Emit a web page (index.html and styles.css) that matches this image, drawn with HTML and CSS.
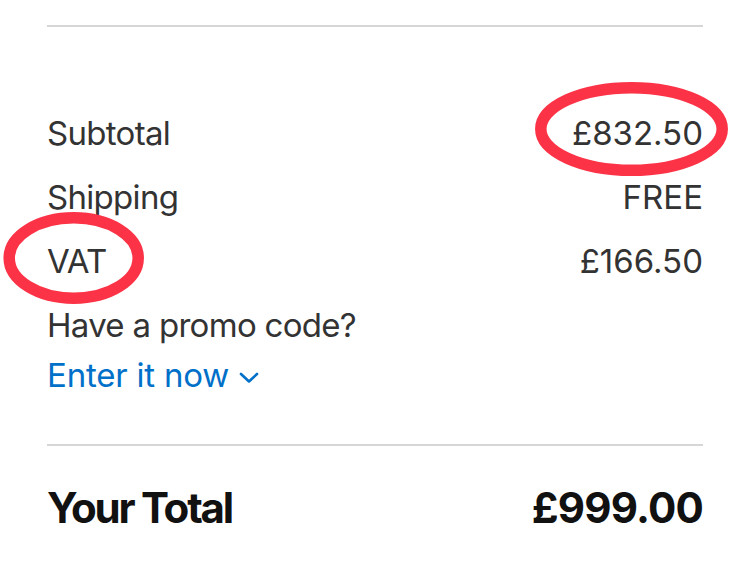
FILE: index.html
```html
<!DOCTYPE html>
<html lang="en">
<head>
<meta charset="utf-8">
<title>Order summary</title>
<link rel="stylesheet" href="styles.css">
</head>
<body>
<main class="summary">
  <hr class="divider divider-top">
  <div class="lines">
    <div class="row"><span>Subtotal</span><span class="value">£832.50</span></div>
    <div class="row"><span>Shipping</span><span class="value">FREE</span></div>
    <div class="row"><span>VAT</span><span class="value">£166.50</span></div>
    <div class="promo">
      <div class="promo-q">Have a promo code?</div>
      <a class="promo-link" href="#">Enter it now<svg class="chev" width="20" height="12" viewBox="0 0 20 12"><path d="M2 2 L10 9.5 L18 2" fill="none" stroke="currentColor" stroke-width="2.6" stroke-linecap="round" stroke-linejoin="round"/></svg></a>
    </div>
  </div>
  <hr class="divider divider-bottom">
  <div class="row total"><span class="total-label">Your Total</span><span class="total-value">£999.00</span></div>
</main>
<svg class="marks" width="750" height="576" viewBox="0 0 750 576" aria-hidden="true">
  <ellipse cx="631.5" cy="129" rx="90.7" ry="41.3" fill="none" stroke="#fc3347" stroke-width="11.5"/>
  <ellipse cx="73.7" cy="258" rx="64.5" ry="40.2" fill="none" stroke="#fc3347" stroke-width="11.5"/>
</svg>
</body>
</html>
```

FILE: styles.css
```css
html, body {
  margin: 0;
  padding: 0;
  background: #ffffff;
}
body {
  width: 750px;
  height: 576px;
  overflow: hidden;
  position: relative;
  font-family: Inter, "Noto Sans", "Liberation Sans", sans-serif;
}
.summary {
  padding: 25px 47px 0 47px;
}
.divider {
  border: 0;
  height: 2px;
  background: #d6d6d6;
  margin: 0;
}
.lines {
  margin-top: 81px;
  display: flex;
  flex-direction: column;
  gap: 14px;
}
.row {
  display: flex;
  justify-content: space-between;
  font-size: 33px;
  line-height: 50px;
  color: #333333;
  letter-spacing: -0.7px;
}
.value {
  letter-spacing: 0;
}
.promo {
  display: flex;
  flex-direction: column;
  font-size: 33px;
  line-height: 50px;
  letter-spacing: -0.7px;
}
.promo-q {
  color: #333333;
}
.promo-link {
  color: #0070c9;
  text-decoration: none;
  display: flex;
  align-items: center;
  letter-spacing: -0.2px;
}
.chev {
  margin-left: 10px;
  margin-top: 5px;
}
.divider-bottom {
  margin-top: 44px;
}
.total {
  margin-top: 37px;
  font-size: 42px;
  font-weight: 700;
  color: #111111;
}
.total-label {
  letter-spacing: -2.2px;
}
.total-value {
  letter-spacing: -0.8px;
}
.marks {
  position: absolute;
  left: 0;
  top: 0;
  pointer-events: none;
}
```
